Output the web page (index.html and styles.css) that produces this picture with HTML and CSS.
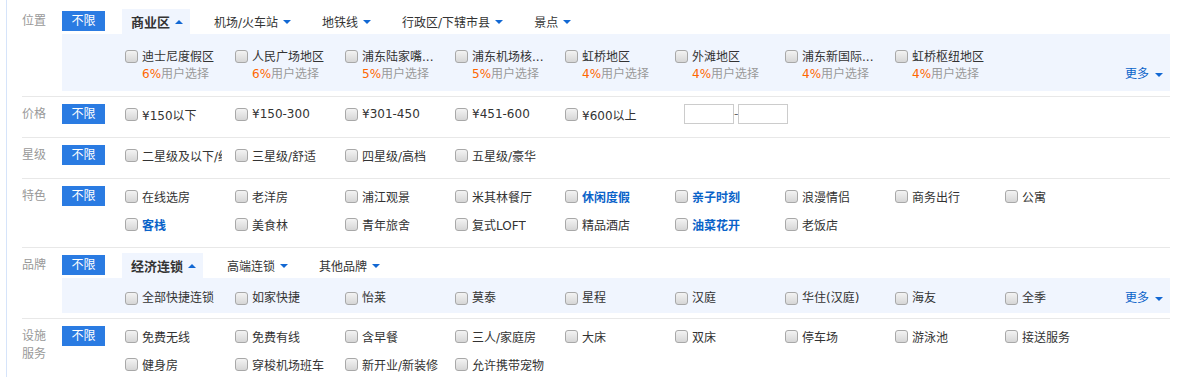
FILE: index.html
```html
<!DOCTYPE HTML>
<html>
    <head>
        <title>酒店筛选</title>
        <meta charset="utf-8">
        <link rel="stylesheet" href="styles.css">
    </head>
    <body>
        <div class="filter">
            <div class="row tabbed">
                <div class="label">位置</div>
                <div class="main">
                    <div class="head">
                        <div class="all">不限</div>
                        <div class="tabs">
                            <div class="tab on">商业区<i class="arrow up"></i></div>
                            <div class="tab">机场/火车站<i class="arrow"></i></div>
                            <div class="tab">地铁线<i class="arrow"></i></div>
                            <div class="tab">行政区/下辖市县<i class="arrow"></i></div>
                            <div class="tab">景点<i class="arrow"></i></div>
                        </div>
                    </div>
                    <div class="panel zone">
                        <div class="items">
                            <div class="item"><span class="box"></span><div><div class="name">迪士尼度假区</div><div class="rate"><em>6%</em>用户选择</div></div></div>
                            <div class="item"><span class="box"></span><div><div class="name">人民广场地区</div><div class="rate"><em>6%</em>用户选择</div></div></div>
                            <div class="item"><span class="box"></span><div><div class="name">浦东陆家嘴...</div><div class="rate"><em>5%</em>用户选择</div></div></div>
                            <div class="item"><span class="box"></span><div><div class="name">浦东机场核...</div><div class="rate"><em>5%</em>用户选择</div></div></div>
                            <div class="item"><span class="box"></span><div><div class="name">虹桥地区</div><div class="rate"><em>4%</em>用户选择</div></div></div>
                            <div class="item"><span class="box"></span><div><div class="name">外滩地区</div><div class="rate"><em>4%</em>用户选择</div></div></div>
                            <div class="item"><span class="box"></span><div><div class="name">浦东新国际...</div><div class="rate"><em>4%</em>用户选择</div></div></div>
                            <div class="item"><span class="box"></span><div><div class="name">虹桥枢纽地区</div><div class="rate"><em>4%</em>用户选择</div></div></div>
                        </div>
                        <div class="more">更多<i class="arrow"></i></div>
                    </div>
                </div>
            </div>

            <div class="row">
                <div class="label">价格</div>
                <div class="main">
                    <div class="all">不限</div>
                    <div class="items">
                        <div class="item"><span class="box"></span><span class="name">¥150以下</span></div>
                        <div class="item"><span class="box"></span><span class="name">¥150-300</span></div>
                        <div class="item"><span class="box"></span><span class="name">¥301-450</span></div>
                        <div class="item"><span class="box"></span><span class="name">¥451-600</span></div>
                        <div class="item"><span class="box"></span><span class="name">¥600以上</span></div>
                        <div class="range"><span class="field"></span><span class="dash">-</span><span class="field"></span></div>
                    </div>
                </div>
            </div>

            <div class="row">
                <div class="label">星级</div>
                <div class="main">
                    <div class="all">不限</div>
                    <div class="items">
                        <div class="item"><span class="box"></span><span class="name">二星级及以下/经济型</span></div>
                        <div class="item"><span class="box"></span><span class="name">三星级/舒适</span></div>
                        <div class="item"><span class="box"></span><span class="name">四星级/高档</span></div>
                        <div class="item"><span class="box"></span><span class="name">五星级/豪华</span></div>
                    </div>
                </div>
            </div>

            <div class="row">
                <div class="label">特色</div>
                <div class="main">
                    <div class="all">不限</div>
                    <div class="items">
                        <div class="item"><span class="box"></span><span class="name">在线选房</span></div>
                        <div class="item"><span class="box"></span><span class="name">老洋房</span></div>
                        <div class="item"><span class="box"></span><span class="name">浦江观景</span></div>
                        <div class="item"><span class="box"></span><span class="name">米其林餐厅</span></div>
                        <div class="item"><span class="box"></span><span class="name hot">休闲度假</span></div>
                        <div class="item"><span class="box"></span><span class="name hot">亲子时刻</span></div>
                        <div class="item"><span class="box"></span><span class="name">浪漫情侣</span></div>
                        <div class="item"><span class="box"></span><span class="name">商务出行</span></div>
                        <div class="item"><span class="box"></span><span class="name">公寓</span></div>
                        <div class="item"><span class="box"></span><span class="name hot">客栈</span></div>
                        <div class="item"><span class="box"></span><span class="name">美食林</span></div>
                        <div class="item"><span class="box"></span><span class="name">青年旅舍</span></div>
                        <div class="item"><span class="box"></span><span class="name">复式LOFT</span></div>
                        <div class="item"><span class="box"></span><span class="name">精品酒店</span></div>
                        <div class="item"><span class="box"></span><span class="name hot">油菜花开</span></div>
                        <div class="item"><span class="box"></span><span class="name">老饭店</span></div>
                    </div>
                </div>
            </div>

            <div class="row tabbed">
                <div class="label">品牌</div>
                <div class="main">
                    <div class="head">
                        <div class="all">不限</div>
                        <div class="tabs">
                            <div class="tab on">经济连锁<i class="arrow up"></i></div>
                            <div class="tab">高端连锁<i class="arrow"></i></div>
                            <div class="tab">其他品牌<i class="arrow"></i></div>
                        </div>
                    </div>
                    <div class="panel brand">
                        <div class="items">
                            <div class="item"><span class="box"></span><span class="name">全部快捷连锁</span></div>
                            <div class="item"><span class="box"></span><span class="name">如家快捷</span></div>
                            <div class="item"><span class="box"></span><span class="name">怡莱</span></div>
                            <div class="item"><span class="box"></span><span class="name">莫泰</span></div>
                            <div class="item"><span class="box"></span><span class="name">星程</span></div>
                            <div class="item"><span class="box"></span><span class="name">汉庭</span></div>
                            <div class="item"><span class="box"></span><span class="name">华住(汉庭)</span></div>
                            <div class="item"><span class="box"></span><span class="name">海友</span></div>
                            <div class="item"><span class="box"></span><span class="name">全季</span></div>
                        </div>
                        <div class="more">更多<i class="arrow"></i></div>
                    </div>
                </div>
            </div>

            <div class="row last">
                <div class="label two">设施<br>服务</div>
                <div class="main">
                    <div class="all">不限</div>
                    <div class="items">
                        <div class="item"><span class="box"></span><span class="name">免费无线</span></div>
                        <div class="item"><span class="box"></span><span class="name">免费有线</span></div>
                        <div class="item"><span class="box"></span><span class="name">含早餐</span></div>
                        <div class="item"><span class="box"></span><span class="name">三人/家庭房</span></div>
                        <div class="item"><span class="box"></span><span class="name">大床</span></div>
                        <div class="item"><span class="box"></span><span class="name">双床</span></div>
                        <div class="item"><span class="box"></span><span class="name">停车场</span></div>
                        <div class="item"><span class="box"></span><span class="name">游泳池</span></div>
                        <div class="item"><span class="box"></span><span class="name">接送服务</span></div>
                        <div class="item"><span class="box"></span><span class="name">健身房</span></div>
                        <div class="item"><span class="box"></span><span class="name">穿梭机场班车</span></div>
                        <div class="item"><span class="box"></span><span class="name">新开业/新装修</span></div>
                        <div class="item"><span class="box"></span><span class="name">允许携带宠物</span></div>
                    </div>
                </div>
            </div>
        </div>
    </body>
</html>
```

FILE: styles.css
```css
body {
    margin: 0;
    font-family: "DejaVu Sans", "Noto Sans CJK SC", sans-serif;
    font-size: 12px;
    color: #333;
    background-color: #fff;
}
.filter {
    margin-left: 6px;
    border-left: 1px solid #d6e4fa;
    padding: 4px 0 0 15px;
    width: 1148px;
    min-height: 373px;
}
.row {
    display: flex;
    padding: 7px 0 13px;
    border-bottom: 1px solid #e8e8e8;
}
.row.tabbed {
    padding: 5px 0;
}
.row.last {
    border-bottom: none;
    padding-bottom: 3px;
}
.label {
    width: 40px;
    flex: none;
    color: #999;
    line-height: 20px;
}
.tabbed .label {
    margin-top: 2px;
}
.label.two {
    line-height: 18px;
    padding-top: 1px;
}
.main {
    flex: 1;
    display: flex;
    align-items: flex-start;
}
.tabbed .main {
    flex-direction: column;
    align-items: stretch;
}
.head {
    display: flex;
    align-items: flex-start;
}
.all {
    width: 43px;
    height: 20px;
    line-height: 20px;
    flex: none;
    text-align: center;
    color: #fff;
    background-color: #2a7be2;
}
.tabbed .all {
    margin-top: 2px;
}
.tabs {
    display: flex;
    margin-left: 17px;
}
.tab {
    display: flex;
    align-items: center;
    gap: 5px;
    height: 25px;
    padding: 0 7px 0 9px;
    margin-right: 15px;
}
.tab.on {
    background-color: #f0f5fe;
    font-weight: bold;
    font-size: 13px;
}
.arrow {
    display: inline-block;
    width: 0;
    height: 0;
    border-left: 4px solid transparent;
    border-right: 4px solid transparent;
    border-top: 4px solid #1268d3;
}
.arrow.up {
    border-top: none;
    border-bottom: 4px solid #1268d3;
}
.items {
    display: flex;
    flex-wrap: wrap;
    row-gap: 8px;
    width: 990px;
    margin-left: 20px;
}
.item {
    width: 110px;
    height: 20px;
    display: flex;
    align-items: center;
}
.box {
    width: 13px;
    height: 13px;
    box-sizing: border-box;
    flex: none;
    margin-right: 4px;
    border: 1px solid #a8a8a8;
    border-radius: 3px;
    background: linear-gradient(#f3f3f3, #d6d6d6);
}
.name {
    max-width: 80px;
    overflow: hidden;
    white-space: nowrap;
}
.hot {
    color: #0a63c9;
    font-weight: bold;
}
.panel {
    display: flex;
    align-items: flex-end;
    background-color: #f0f5fe;
    padding: 15px 7px 8px 63px;
}
.panel.brand {
    padding: 12px 7px 6px 63px;
}
.panel .items {
    margin-left: 0;
}
.panel .item {
    height: 17px;
    line-height: 17px;
}
.zone .item {
    height: auto;
    align-items: flex-start;
}
.zone .box {
    margin-top: 1px;
}
.rate {
    color: #999;
}
.rate em {
    font-style: normal;
    color: #f60;
}
.more {
    margin-left: auto;
    display: flex;
    align-items: center;
    gap: 6px;
    line-height: 17px;
    color: #0a63c9;
}
.range {
    display: flex;
    align-items: center;
    margin-left: 9px;
}
.field {
    width: 50px;
    height: 20px;
    box-sizing: border-box;
    border: 1px solid #ccc;
    background-color: #fff;
}
.dash {
    width: 4px;
    color: #666;
    line-height: 20px;
}
```
